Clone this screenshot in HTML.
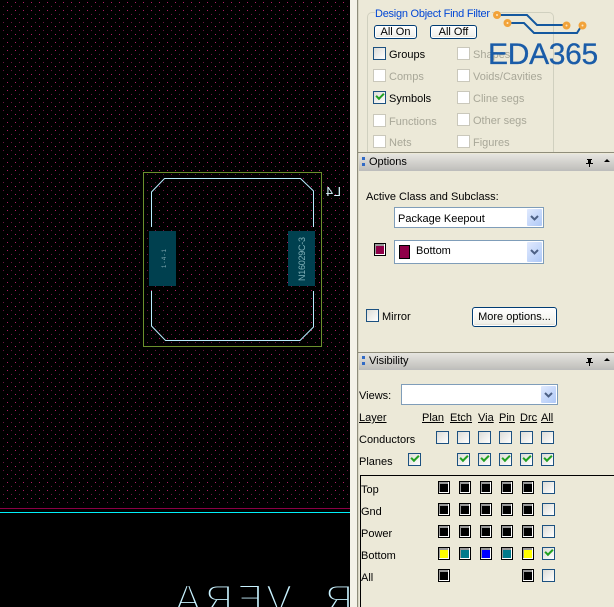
<!DOCTYPE html>
<html><head><meta charset="utf-8"><style>
html,body{margin:0;padding:0;background:#ece9d8}
body{position:relative;width:614px;height:607px;overflow:hidden;font-family:"Liberation Sans",sans-serif;font-size:11px;color:#000}
.a{position:absolute}
.t{position:absolute;white-space:nowrap;line-height:13px;transform:translateY(-5px)}
.un{text-decoration:underline}
.g{color:#a8a798}
.cb{position:absolute;width:11px;height:11px;border:1px solid #1c5180;background:linear-gradient(135deg,#dcdcd7,#fff)}
.cd{position:absolute;width:11px;height:11px;border:1px solid #cac8bb;background:#fff}
.ck::after{content:"";position:absolute;left:2px;top:1px;width:6px;height:3px;border-left:2px solid #21a121;border-bottom:2px solid #21a121;transform:rotate(-45deg)}
.btn{position:absolute;box-sizing:border-box;border:1px solid #003c74;border-radius:3px;background:linear-gradient(#fff,#f0f0ea 85%,#d6d0c5);text-align:center;box-shadow:inset 0 0 0 1px #fff}
.hd{position:absolute;left:359px;width:255px;height:17px;background:linear-gradient(#e6e5e0,#c4c3bf 85%,#bbb);}
.dots i{position:absolute;left:5px;width:3px;height:3px;background:#316ac5}
.dd{position:absolute;box-sizing:border-box;border:1px solid #7f9db9;background:#fff}
.ar{position:absolute;right:1px;top:1px;bottom:1px;width:15px;background:linear-gradient(135deg,#e1eafe,#aec8f7);border-radius:1px}
.ar svg{position:absolute;left:3px;top:50%;margin-top:-4px}
.cs{position:absolute;box-sizing:border-box;width:12px;height:13px;background:#fff;border:1px solid #000}
.cs b{position:absolute;left:0;top:0;width:9px;height:10px;background:#999;display:block}
.cs u{position:absolute;left:1px;top:2px;width:8px;height:8px;display:block}
</style></head><body>
<!-- canvas -->
<svg class="a" style="left:0;top:0" width="350" height="607" viewBox="0 0 350 607">
<defs><pattern id="p" width="8" height="8" patternUnits="userSpaceOnUse"><rect width="8" height="8" fill="#000"/><rect x="7" y="2" width="1" height="1" fill="#b01c64"/><rect x="3" y="6" width="1" height="1" fill="#6a1640"/></pattern></defs>
<rect width="350" height="607" fill="#000"/>
<rect width="350" height="506" fill="url(#p)"/>
<rect x="0" y="508" width="350" height="1" fill="#8b0045"/>
<rect x="0" y="512" width="350" height="1" fill="#00f0f8"/>
<rect x="143.5" y="172.5" width="178" height="174" fill="none" stroke="#6c8f2c"/>
<g fill="none" stroke="#b8ecff" stroke-width="1">
<path d="M151.500 227V192L164.500 178.500H300.500L313.500 191V227"/>
<path d="M151.500 291V326L165.500 340.500H300L313.500 327V291"/>
</g>
<rect x="149" y="231" width="27" height="55" fill="#00404f"/>
<rect x="288" y="231" width="27" height="55" fill="#00404f"/>
<text transform="translate(166,268) rotate(-90)" font-family="Liberation Sans" font-size="6" fill="#80a8b0" textLength="19">1-4-1</text>
<text transform="translate(305,281) rotate(-90)" font-family="Liberation Sans" font-size="9" fill="#80b0b8" textLength="44">N16029C-3</text>
<g font-family="Liberation Sans" fill="#c8f2ff" stroke="#000" stroke-width="2">
<text transform="translate(191,0) scale(-1,1)" y="612" x="-10" font-size="39">A</text>
<text transform="translate(233,0) scale(-1,1)" y="612" font-size="39">R</text>
<text transform="translate(263,0) scale(-1,1)" y="612" font-size="39">E</text>
<text transform="translate(292,0) scale(-1,1)" y="612" font-size="39">V</text>
<text transform="translate(353,0) scale(-1,1)" y="612" font-size="39">R</text>
</g>
<g font-family="Liberation Sans" font-size="13" fill="#d8f6ff">
<text transform="translate(341,196) scale(-1,1)">L</text>
<text transform="translate(333,196) scale(-1,1)">4</text>
</g>
</svg>
<div class="a" style="left:350px;top:0;width:7px;height:607px;background:#f4f2e8"></div>
<div class="a" style="left:357px;top:0;width:1px;height:607px;background:#8f8d7b"></div>
<div class="a" style="left:358px;top:0;width:1px;height:607px;background:#d8d5c4"></div>

<!-- group box -->
<div class="a" style="left:367px;top:12px;width:187px;height:140px;box-sizing:border-box;border:1px solid #d0d0bf;border-bottom:0;border-radius:5px 5px 0 0"></div>
<div class="t" style="left:375px;top:13px;color:#0046d5;background:#ece9d8;padding-right:2px;letter-spacing:-.25px">Design Object Find Filter</div>
<div class="btn" style="left:374px;top:25px;width:43px;height:14px;line-height:12px">All On</div>
<div class="btn" style="left:430px;top:25px;width:47px;height:14px;line-height:12px">All Off</div>
<div class="cb" style="left:373px;top:47px"></div><div class="t" style="left:389px;top:54px">Groups</div>
<div class="cd" style="left:373px;top:69px"></div><div class="t g" style="left:389px;top:76px">Comps</div>
<div class="cb ck" style="left:373px;top:91px"></div><div class="t" style="left:389px;top:98px">Symbols</div>
<div class="cd" style="left:373px;top:114px"></div><div class="t g" style="left:389px;top:121px">Functions</div>
<div class="cd" style="left:373px;top:135px"></div><div class="t g" style="left:389px;top:142px">Nets</div>
<div class="cd" style="left:457px;top:47px"></div><div class="t g" style="left:473px;top:54px">Shapes</div>
<div class="cd" style="left:457px;top:69px"></div><div class="t g" style="left:473px;top:76px">Voids/Cavities</div>
<div class="cd" style="left:457px;top:91px"></div><div class="t g" style="left:473px;top:98px">Cline segs</div>
<div class="cd" style="left:457px;top:113px"></div><div class="t g" style="left:473px;top:120px">Other segs</div>
<div class="cd" style="left:457px;top:135px"></div><div class="t g" style="left:473px;top:142px">Figures</div>

<!-- logo -->
<svg class="a" style="left:489px;top:6px" width="120" height="34" viewBox="489 6 120 34" fill="none">
<g stroke="#14589f" stroke-width="2"><path d="M497 15H527L537 25H566"/><path d="M507 23H524L534 33H577L582 25"/></g>
<g fill="#fde9c8" stroke="#f2a33a" stroke-width="3"><circle cx="497" cy="15" r="2.500"/><circle cx="507.500" cy="23" r="2.500"/><circle cx="566.500" cy="25.500" r="2.500"/><circle cx="582.500" cy="25.500" r="2.500"/></g>
</svg>
<div class="a" style="left:488px;top:39px;line-height:32px;font-size:30px;color:#1a5ca8;letter-spacing:-.3px;white-space:nowrap;-webkit-text-stroke:.3px #1a5ca8">EDA365</div>

<!-- Options -->
<div class="a" style="left:358px;top:152px;width:256px;height:1px;background:#8f8d7b"></div>
<div class="hd" style="top:154px"></div>
<div class="dots a" style="left:357px;top:154px"><i style="top:3px"></i><i style="top:9px"></i></div>
<div class="t" style="left:369px;top:161px">Options</div>
<svg class="a" style="left:584px;top:157px" width="26" height="10" fill="#000"><path d="M3 2h5v1H7v3h2v1H6v3H5V7H2V6h2V3H3z"/><path d="M20 5l3-3 3 3z"/></svg>
<div class="t" style="left:366px;top:196px">Active Class and Subclass:</div>
<div class="dd" style="left:394px;top:207px;width:150px;height:21px"><div class="t" style="left:3px;top:10px">Package Keepout</div><div class="ar"><svg width="9" height="8"><path d="M1 2l3.500 3.500L8 2" stroke="#4d6185" stroke-width="2" fill="none"/></svg></div></div>
<div class="cs" style="left:374px;top:243px"><b></b><u style="background:#8f0048"></u></div>
<div class="dd" style="left:394px;top:240px;width:150px;height:24px"><div class="a" style="left:4px;top:4px;width:9px;height:12px;background:#8f0048;border:1px solid #000"></div><div class="t" style="left:21px;top:9px">Bottom</div><div class="ar"><svg width="9" height="8"><path d="M1 2l3.500 3.500L8 2" stroke="#4d6185" stroke-width="2" fill="none"/></svg></div></div>
<div class="cb" style="left:366px;top:309px"></div><div class="t" style="left:382px;top:316px">Mirror</div>
<div class="btn" style="left:472px;top:307px;width:85px;height:20px;line-height:18px">More options...</div>

<!-- Visibility -->
<div class="a" style="left:358px;top:352px;width:256px;height:1px;background:#8f8d7b"></div>
<div class="hd" style="top:353px"></div>
<div class="dots a" style="left:357px;top:353px"><i style="top:3px"></i><i style="top:9px"></i></div>
<div class="t" style="left:369px;top:360px">Visibility</div>
<svg class="a" style="left:584px;top:356px" width="26" height="10" fill="#000"><path d="M3 2h5v1H7v3h2v1H6v3H5V7H2V6h2V3H3z"/><path d="M20 5l3-3 3 3z"/></svg>
<div class="t" style="left:359px;top:395px">Views:</div>
<div class="dd" style="left:401px;top:384px;width:157px;height:21px"><div class="ar"><svg width="9" height="8"><path d="M1 2l3.500 3.500L8 2" stroke="#4d6185" stroke-width="2" fill="none"/></svg></div></div>
<div class="t un" style="left:359px;top:417px">Layer</div><div class="t un" style="left:422px;top:417px">Plan</div><div class="t un" style="left:450px;top:417px">Etch</div><div class="t un" style="left:478px;top:417px">Via</div><div class="t un" style="left:499px;top:417px">Pin</div><div class="t un" style="left:520px;top:417px">Drc</div><div class="t un" style="left:541px;top:417px">All</div>
<div class="t" style="left:359px;top:439px">Conductors</div>
<div class="cb" style="left:436px;top:431px"></div><div class="cb" style="left:457px;top:431px"></div><div class="cb" style="left:478px;top:431px"></div><div class="cb" style="left:499px;top:431px"></div><div class="cb" style="left:520px;top:431px"></div><div class="cb" style="left:541px;top:431px"></div>
<div class="t" style="left:359px;top:461px">Planes</div>
<div class="cb ck" style="left:408px;top:453px"></div><div class="cb ck" style="left:457px;top:453px"></div><div class="cb ck" style="left:478px;top:453px"></div><div class="cb ck" style="left:499px;top:453px"></div><div class="cb ck" style="left:520px;top:453px"></div><div class="cb ck" style="left:541px;top:453px"></div>
<div class="a" style="left:360px;top:475px;width:254px;height:1px;background:#000"></div>
<div class="a" style="left:360px;top:475px;width:1px;height:132px;background:#000"></div>

<div class="t" style="left:361px;top:489px">Top</div><div class="t" style="left:361px;top:511px">Gnd</div><div class="t" style="left:361px;top:533px">Power</div><div class="t" style="left:361px;top:555px">Bottom</div><div class="t" style="left:361px;top:577px">All</div>

<div class="cs" style="left:438px;top:481px"><b></b><u style="background:#000"></u></div><div class="cs" style="left:459px;top:481px"><b></b><u style="background:#000"></u></div><div class="cs" style="left:480px;top:481px"><b></b><u style="background:#000"></u></div><div class="cs" style="left:501px;top:481px"><b></b><u style="background:#000"></u></div><div class="cs" style="left:522px;top:481px"><b></b><u style="background:#000"></u></div><div class="cb" style="left:542px;top:481px"></div>
<div class="cs" style="left:438px;top:503px"><b></b><u style="background:#000"></u></div><div class="cs" style="left:459px;top:503px"><b></b><u style="background:#000"></u></div><div class="cs" style="left:480px;top:503px"><b></b><u style="background:#000"></u></div><div class="cs" style="left:501px;top:503px"><b></b><u style="background:#000"></u></div><div class="cs" style="left:522px;top:503px"><b></b><u style="background:#000"></u></div><div class="cb" style="left:542px;top:503px"></div>
<div class="cs" style="left:438px;top:525px"><b></b><u style="background:#000"></u></div><div class="cs" style="left:459px;top:525px"><b></b><u style="background:#000"></u></div><div class="cs" style="left:480px;top:525px"><b></b><u style="background:#000"></u></div><div class="cs" style="left:501px;top:525px"><b></b><u style="background:#000"></u></div><div class="cs" style="left:522px;top:525px"><b></b><u style="background:#000"></u></div><div class="cb" style="left:542px;top:525px"></div>
<div class="cs" style="left:438px;top:547px"><b></b><u style="background:#ff0"></u></div><div class="cs" style="left:459px;top:547px"><b></b><u style="background:#007a8c"></u></div><div class="cs" style="left:480px;top:547px"><b></b><u style="background:#00f"></u></div><div class="cs" style="left:501px;top:547px"><b></b><u style="background:#007a8c"></u></div><div class="cs" style="left:522px;top:547px"><b></b><u style="background:#ff0"></u></div><div class="cb ck" style="left:542px;top:547px"></div>
<div class="cs" style="left:438px;top:569px"><b></b><u style="background:#000"></u></div><div class="cs" style="left:522px;top:569px"><b></b><u style="background:#000"></u></div><div class="cb" style="left:542px;top:569px"></div>
</body></html>
